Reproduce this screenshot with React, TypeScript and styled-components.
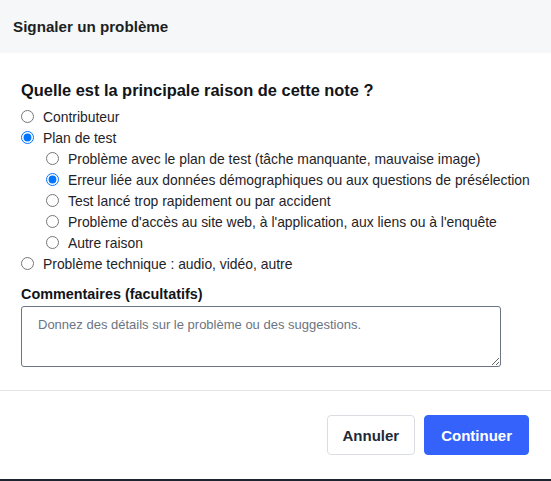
import React from "react";
import styled, { createGlobalStyle } from "styled-components";

const Global = createGlobalStyle`
  html, body { margin: 0; padding: 0; background: #ffffff; }
  body { font-family: "Liberation Sans", Arial, sans-serif; color: #1b1f24; }
  * { box-sizing: border-box; }
`;

const Frame = styled.div`
  width: 551px;
  height: 481px;
  display: flex;
  flex-direction: column;
  background: #ffffff;
  border-bottom: 2px solid #1c2530;
`;

const Header = styled.div`
  height: 53px;
  flex: none;
  display: flex;
  align-items: center;
  padding: 0 13px;
  background: #f5f7f8;
  font-size: 15.2px;
  font-weight: 700;
  color: #1b1f24;
`;

const Body = styled.div`
  display: flex;
  flex-direction: column;
  padding: 27px 21px 0;
`;

const Heading = styled.div<{ $gap?: number; $size?: number }>`
  font-size: ${(p) => p.$size ?? 15}px;
  font-weight: 700;
  line-height: 20px;
  color: #111418;
  margin-top: ${(p) => p.$gap ?? 0}px;
`;

const List = styled.div`
  display: flex;
  flex-direction: column;
  margin-top: 6px;
`;

const Option = styled.label<{ $nested?: boolean }>`
  display: flex;
  align-items: center;
  height: 21px;
  gap: 9px;
  padding-left: ${(p) => (p.$nested ? 25 : 0)}px;
  font-size: 13.9px;
  color: #1f2328;
  cursor: pointer;
  white-space: nowrap;
`;

const Radio = styled.input`
  margin: 0;
  width: 13px;
  height: 13px;
  flex: none;
`;

const TextArea = styled.textarea`
  margin-top: 2px;
  width: 480px;
  height: 61px;
  border: 1px solid #6a7585;
  border-radius: 3px;
  padding: 10px 16px;
  font-family: "Liberation Sans", Arial, sans-serif;
  font-size: 13px;
  color: #1f2328;
  &::placeholder { color: #6b7482; }
`;

const Divider = styled.div`
  height: 1px;
  background: #e2e4e6;
  margin-top: 23px;
`;

const Footer = styled.div`
  display: flex;
  justify-content: flex-end;
  gap: 9px;
  padding: 24px 22px 0;
`;

const Button = styled.button<{ $primary?: boolean }>`
  height: 40px;
  padding: 0 ${(p) => (p.$primary ? 16 : 15)}px;
  border-radius: 4px;
  font-family: "Liberation Sans", Arial, sans-serif;
  font-size: 15px;
  font-weight: 700;
  cursor: pointer;
  border: 1px solid ${(p) => (p.$primary ? "#3562fb" : "#dadde1")};
  background: ${(p) => (p.$primary ? "#3562fb" : "#ffffff")};
  color: ${(p) => (p.$primary ? "#ffffff" : "#1e2a38")};
`;

const top = [
  { id: "contrib", label: "Contributeur" },
  { id: "plan", label: "Plan de test" },
];

const sub = [
  { id: "s1", label: "Problème avec le plan de test (tâche manquante, mauvaise image)" },
  { id: "s2", label: "Erreur liée aux données démographiques ou aux questions de présélection" },
  { id: "s3", label: "Test lancé trop rapidement ou par accident" },
  { id: "s4", label: "Problème d'accès au site web, à l'application, aux liens ou à l'enquête" },
  { id: "s5", label: "Autre raison" },
];

export default function App() {
  const [main, setMain] = React.useState("plan");
  const [detail, setDetail] = React.useState("s2");
  return (
    <>
      <Global />
      <Frame>
        <Header>Signaler un problème</Header>
        <Body>
          <Heading $size={16.4}>Quelle est la principale raison de cette note ?</Heading>
          <List>
            {top.map((o) => (
              <Option key={o.id}>
                <Radio type="radio" name="main" checked={main === o.id} onChange={() => setMain(o.id)} />
                {o.label}
              </Option>
            ))}
            {sub.map((o) => (
              <Option key={o.id} $nested>
                <Radio type="radio" name="detail" checked={detail === o.id} onChange={() => setDetail(o.id)} />
                {o.label}
              </Option>
            ))}
            <Option>
              <Radio type="radio" name="main" checked={main === "tech"} onChange={() => setMain("tech")} />
              Problème technique : audio, vidéo, autre
            </Option>
          </List>
          <Heading $gap={10} $size={14.4}>Commentaires (facultatifs)</Heading>
          <TextArea placeholder="Donnez des détails sur le problème ou des suggestions." />
        </Body>
        <Divider />
        <Footer>
          <Button>Annuler</Button>
          <Button $primary>Continuer</Button>
        </Footer>
      </Frame>
    </>
  );
}
